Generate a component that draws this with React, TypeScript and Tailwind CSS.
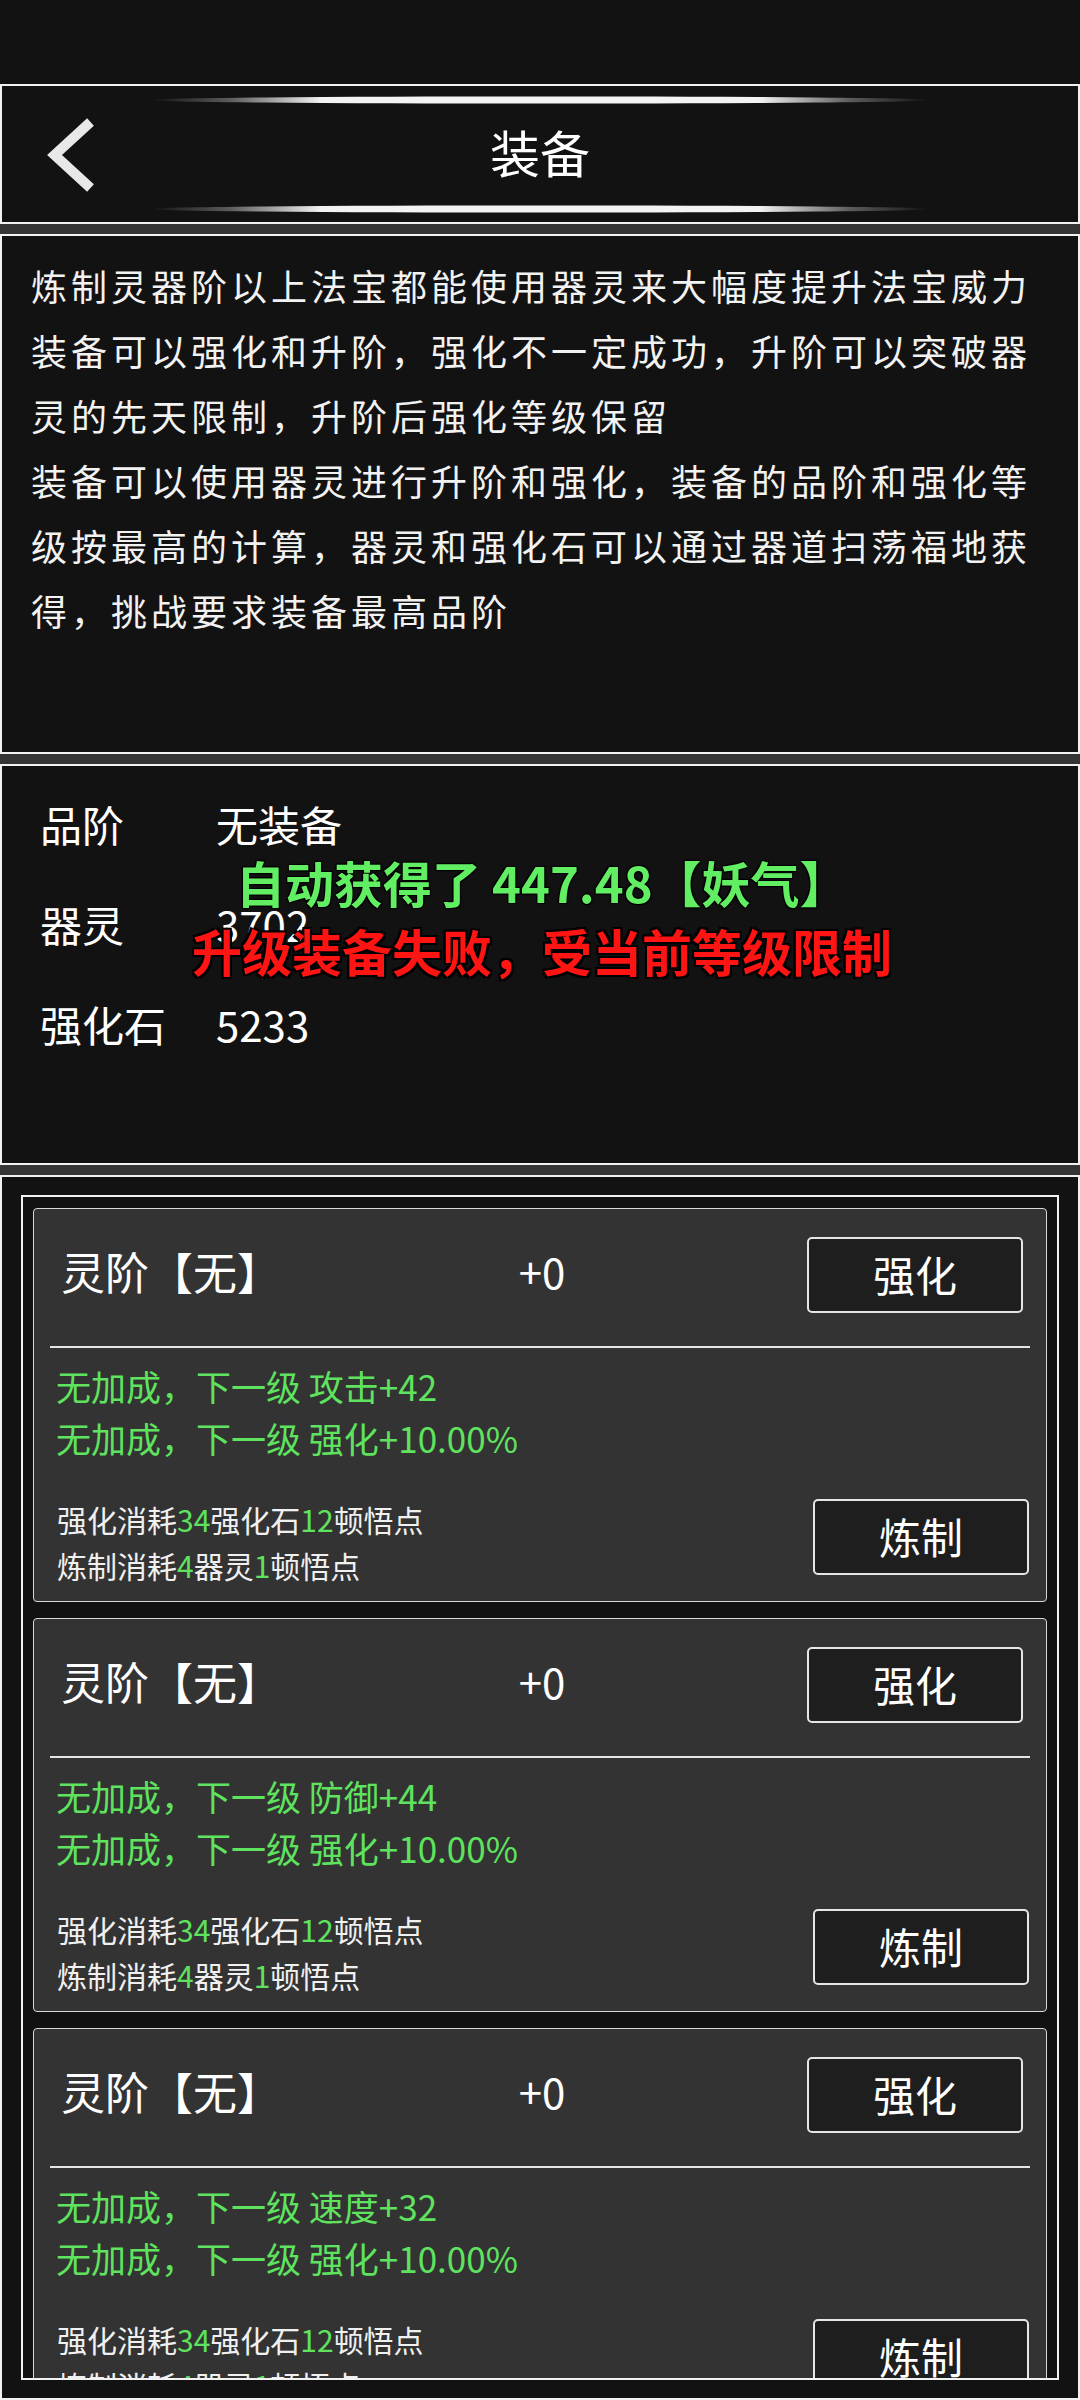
import type { ReactNode } from "react";

type CardProps = {
  stat: string;
};

function Glow({ id }: { id: string }) {
  return (
    <svg width="780" height="8" viewBox="0 0 780 8" className="mx-auto block">
      <defs>
        <linearGradient id={id} x1="0" x2="1" y1="0" y2="0">
          <stop offset="0" stopColor="#fff" stopOpacity="0" />
          <stop offset="0.1" stopColor="#fff" stopOpacity="0.3" />
          <stop offset="0.22" stopColor="#fff" stopOpacity="0.95" />
          <stop offset="0.78" stopColor="#fff" stopOpacity="0.95" />
          <stop offset="0.9" stopColor="#fff" stopOpacity="0.3" />
          <stop offset="1" stopColor="#fff" stopOpacity="0" />
        </linearGradient>
      </defs>
      <ellipse cx="390" cy="4" rx="390" ry="3.6" fill={`url(#${id})`} />
    </svg>
  );
}

function Btn({ children, className = "" }: { children: ReactNode; className?: string }) {
  return (
    <div
      className={`flex h-[76px] w-[216px] items-center justify-center rounded-[5px] border-2 border-[#e6e6e6] bg-[#1e1e1e] pb-[3px] text-[42px] leading-none text-white ${className}`}
    >
      {children}
    </div>
  );
}

function G({ children }: { children: ReactNode }) {
  return <span className="text-[#5fe35f]">{children}</span>;
}

function EquipCard({ stat }: CardProps) {
  return (
    <div className="flex h-[394px] shrink-0 flex-col rounded-[4px] border border-[#d9d9d9] bg-[#333333]">
      <div className="mt-[28px] grid h-[76px] grid-cols-[1fr_auto_1fr] items-center pl-[27px] pr-[23px]">
        <span className="mb-[8px] text-[44px] leading-none text-white">灵阶【无】</span>
        <span className="mb-[8px] text-[42px] leading-none text-white">+0</span>
        <div className="flex justify-end">
          <Btn>强化</Btn>
        </div>
      </div>
      <div className="mx-[16px] mt-[33px] h-[2px] bg-[#e5e5e5]" />
      <div className="mt-[12px] pl-[22px] text-[35px] leading-[52px] text-[#5fe35f]">
        <p>无加成，下一级 {stat}</p>
        <p>无加成，下一级 强化+10.00%</p>
      </div>
      <div className="mt-[32px] flex items-start justify-between pl-[23px] pr-[17px]">
        <div className="text-[30px] leading-[46px] text-[#f0f0f0]">
          <p>
            强化消耗<G>34</G>强化石<G>12</G>顿悟点
          </p>
          <p>
            炼制消耗<G>4</G>器灵<G>1</G>顿悟点
          </p>
        </div>
        <Btn className="mt-[3px]">炼制</Btn>
      </div>
    </div>
  );
}

export default function App() {
  return (
    <div className="flex h-[2400px] w-[1080px] flex-col overflow-hidden bg-[#353535] font-['Noto_Sans_CJK_SC',sans-serif]">
      <div className="h-[84px] shrink-0 bg-[#121212]" />

      {/* header */}
      <div className="flex h-[140px] shrink-0 flex-col border-2 border-[#f2f2f2] bg-[#121212]">
        <div className="mt-[10px]">
          <Glow id="glowTop" />
        </div>
        <div className="grid flex-1 grid-cols-[1fr_auto_1fr] items-center">
          <svg width="60" height="84" viewBox="0 0 60 84" className="ml-[38px]">
            <polyline
              points="50.5,9 14.5,42 50.5,75"
              fill="none"
              stroke="#e8e8e8"
              strokeWidth="10"
              strokeLinejoin="miter"
              strokeMiterlimit="10"
            />
          </svg>
          <span className="mb-[8px] text-[50px] leading-none text-white">装备</span>
          <div />
        </div>
        <div className="mb-[9px]">
          <Glow id="glowBottom" />
        </div>
      </div>

      {/* description */}
      <div className="mt-[10px] h-[520px] shrink-0 border-2 border-[#f2f2f2] bg-[#121212] px-[29px] pt-[17px] text-[36px] leading-[65px] tracking-[4px] text-[#f2f2f2]">
        <p>炼制灵器阶以上法宝都能使用器灵来大幅度提升法宝威力</p>
        <p>装备可以强化和升阶，强化不一定成功，升阶可以突破器灵的先天限制，升阶后强化等级保留</p>
        <p>
          装备可以使用器灵进行升阶和强化，装备的品阶和强化等级按最高的计算，器灵和强化石可以通过器道扫荡福地获得，挑战要求装备最高品阶
        </p>
      </div>

      {/* stats */}
      <div className="relative mt-[10px] h-[401px] shrink-0 border-2 border-[#f2f2f2] bg-[#121212] pl-[38px] pt-[7px] text-[42px] text-white">
        <div className="flex h-[100px] items-center">
          <span className="w-[176px]">品阶</span>
          <span>无装备</span>
        </div>
        <div className="flex h-[100px] items-center">
          <span className="w-[176px]">器灵</span>
          <span>3702</span>
        </div>
        <div className="flex h-[100px] items-center">
          <span className="w-[176px]">强化石</span>
          <span>5233</span>
        </div>

        <div className="absolute left-[234px] top-[87px] whitespace-nowrap text-[49px] font-bold leading-[58px] text-[#62ee62] [text-shadow:0_0_3px_#000,1px_1px_0_#000,-1px_-1px_0_#000,1px_-1px_0_#000,-1px_1px_0_#000]">
          自动获得了 447.48【妖气】
        </div>
        <div className="absolute left-[190px] top-[154px] whitespace-nowrap text-[50px] font-bold leading-[60px] text-[#ff1414] [text-shadow:0_0_3px_#000,2px_2px_0_#000,-2px_-2px_0_#000,2px_-2px_0_#000,-2px_2px_0_#000]">
          升级装备失败，受当前等级限制
        </div>
      </div>

      {/* equipment list */}
      <div className="mt-[10px] flex h-[1225px] shrink-0 border-2 border-[#f2f2f2] bg-[#121212] px-[19px] py-[18px]">
        <div className="flex flex-1 flex-col gap-[16px] overflow-hidden border-2 border-[#f2f2f2] px-[10px] pt-[11px]">
          <EquipCard stat="攻击+42" />
          <EquipCard stat="防御+44" />
          <EquipCard stat="速度+32" />
        </div>
      </div>
    </div>
  );
}
